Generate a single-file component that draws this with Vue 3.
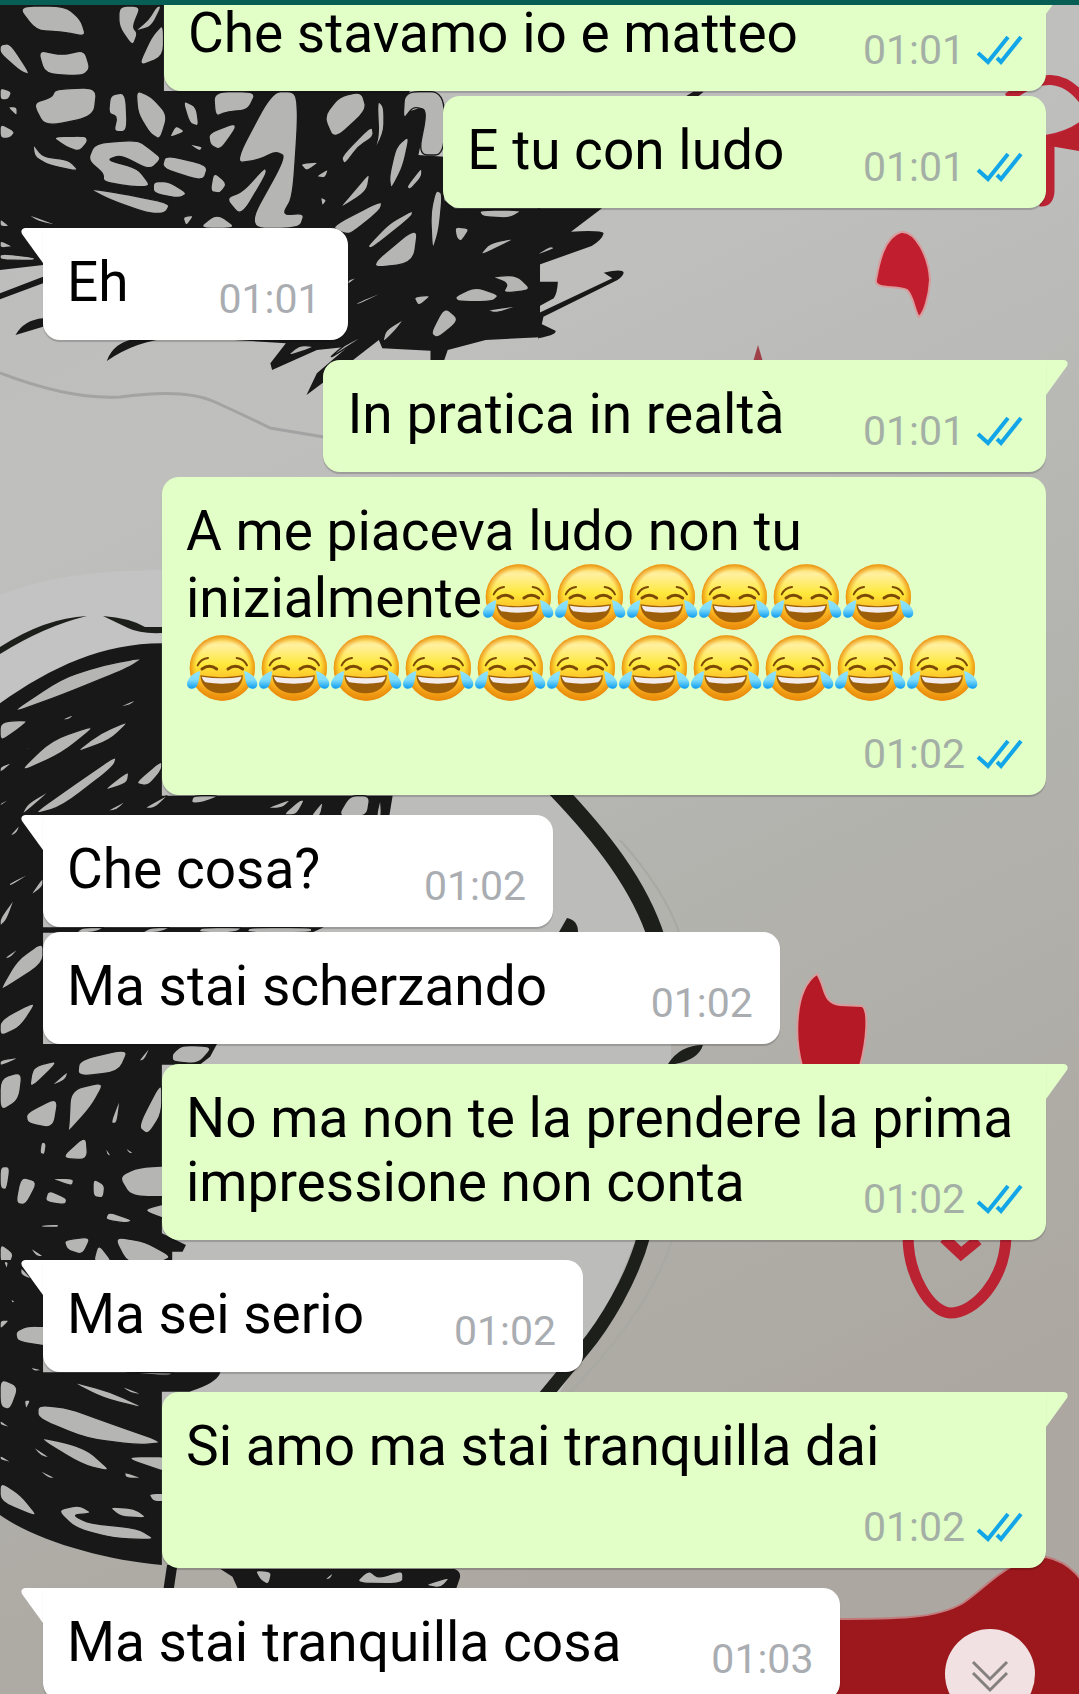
<template>
  <div class="screen">

    <!-- WALLPAPER -->
    <svg class="wallpaper" viewBox="0 0 1079 1694" preserveAspectRatio="xMidYMid slice" aria-hidden="true">
      <defs>
        <linearGradient id="wall" x1="0" y1="0" x2="0.3" y2="1">
          <stop offset="0" stop-color="#bcbcbc" />
          <stop offset="0.3" stop-color="#bfbfbe" />
          <stop offset="0.6" stop-color="#b4b5b0" />
          <stop offset="1" stop-color="#aca7a1" />
        </linearGradient>
        <linearGradient id="face" x1="0" y1="0" x2="0" y2="1">
          <stop offset="0" stop-color="#fbd54a" />
          <stop offset="0.15" stop-color="#fff0a0" />
          <stop offset="0.45" stop-color="#ffe83a" />
          <stop offset="0.75" stop-color="#fbb321" />
          <stop offset="1" stop-color="#ea8a0c" />
        </linearGradient>
        <radialGradient id="rim" cx="0.5" cy="0.5" r="0.5">
          <stop offset="0.8" stop-color="#f09a10" stop-opacity="0" />
          <stop offset="1" stop-color="#e88a0c" stop-opacity="0.9" />
        </radialGradient>
        <linearGradient id="tear" x1="0" y1="0" x2="0" y2="1">
          <stop offset="0" stop-color="#8fe4fb" />
          <stop offset="0.5" stop-color="#7fdcfb" />
          <stop offset="1" stop-color="#0b9bee" />
        </linearGradient>
        <symbol id="joy" viewBox="27 39 216 213">
          <circle cx="136" cy="141" r="98" fill="url(#face)" />
          <circle cx="136" cy="141" r="98" fill="url(#rim)" />
          <g fill="none" stroke="#7d4a06" stroke-linecap="round">
            <path stroke-width="6" d="M62 133Q72 113 93 111M210 133Q200 113 179 111" />
            <path stroke-width="9" d="M75 144Q97 128 119 144M153 144Q175 128 197 144" />
          </g>
          <path fill="#9c5e08" d="M70 163Q134 174 198 163C196 200 168 217 134 217S72 200 70 163z" />
          <path fill="#f3ecec" d="M74 167Q134 177 194 167Q191 178 183 184Q134 192 85 184Q77 178 74 167z" />
          <path fill="url(#tear)" d="M70 150C50 155 30 172 30 190C31 208 55 207 61 192C66 180 67 165 70 150z" />
          <path fill="url(#tear)" d="M201 150C221 155 241 172 241 190C240 208 216 207 210 192C205 180 204 165 201 150z" />
        </symbol>
      </defs>

      <rect width="1079" height="1694" fill="url(#wall)" />
      <path fill="#c3c3c3" d="M0 595Q60 570 162 570H500V790H0z" />
      <path fill="#bcbcbb" d="M0 780H550Q650 870 668 1000Q690 1180 560 1392H545L160 1500Q60 1500 0 1400z" />
      <path fill="none" stroke="#a3a3a3" stroke-width="3" d="M0 373Q70 400 120 397Q185 388 215 402Q250 418 270 428L330 438" />
      <path fill="none" stroke="#a9a9a4" stroke-width="2" d="M570 1392Q650 1310 672 1240M620 840Q665 890 680 935" />

      <!-- hair strokes -->
      <g v-for="(part, i) in doodles" :key="i" :transform="part.place">
        <path fill="#171817" :d="part.ink" />
        <path fill="#b5b5b4" stroke="#171817" stroke-width="4" :d="soften(part.gaps)" />
      </g>

      <!-- face outline -->
      <g fill="none" stroke="#1d1f1b">
        <path stroke-width="17" d="M555 788C600 835 640 885 657 940" />
        <path stroke-width="13" d="M644 1235C632 1280 604 1325 583 1350L545 1396" />
      </g>
      <path fill="#1d1f1b" d="M0 647Q45 618 87 616Q45 626 0 654zM103 616Q130 618 145 627H162V633Q140 634 128 628zM559 932L567 918Q578 920 578 932zM668 1064Q680 1045 703 1045Q698 1060 675 1064z" />

      <!-- red shapes -->
      <g stroke="#d99b9c" stroke-width="2">
        <path fill="#c11f2f" d="M901 232C915 230 929 257 930 280C929 297 924 313 919 317C914 310 914 297 907 290C898 285 874 290 876 280C879 263 884 237 901 232z" />
        <path fill="#b51926" d="M817 974C826 987 822 1003 840 1005L862 1006C869 1010 867 1040 860 1066H802C795 1040 793 990 817 974z" />
      </g>
      <path fill="#a04048" d="M753 362L758 345L763 362z" />
      <g fill="none" stroke="#bb2333">
        <path stroke-width="10" d="M1008 98Q1055 60 1085 102M1046 140Q1070 136 1085 124" />
        <path stroke-width="11" d="M1049 140V190Q1049 202 1040 201" />
        <path stroke-width="11" d="M908 1236C908 1275 930 1312 950 1313C975 1313 1005 1280 1006 1236" />
        <path stroke-width="11" d="M944 1238L961 1254L978 1240" />
      </g>
      <path fill="#b8202e" d="M1050 138L1085 122V152L1050 146z" />
      <path fill="#9c181c" stroke="#c27b7d" stroke-width="2" d="M820 1619C890 1619 935 1620 963 1603C990 1585 1005 1560 1046 1557C1070 1562 1085 1580 1090 1600V1704H820z" />
    </svg>

    <!-- TOP BAR -->
    <header class="topbar"></header>

    <!-- MESSAGES -->
    <main class="chat">
      <ul class="messages">
        <li
          v-for="(msg, i) in messages"
          :key="i"
          class="row"
          :class="[msg.from, { first: msg.tail }]"
        >
          <svg v-if="msg.tail" class="tail" viewBox="0 0 23 36" aria-hidden="true">
            <path d="M23 0H4Q-1 1 1 6L22 35H23z" />
          </svg>

          <div class="bubble">
            <p class="text">
              {{ msg.text }}<template v-for="(count, r) in msg.emoji" :key="r"><wbr><span class="run"><svg v-for="n in count" :key="n" class="emoji" role="img" aria-label="😂"><use href="#joy" /></svg></span></template><span class="spacer"></span>
            </p>

            <div class="meta">
              <time>{{ msg.time }}</time>
              <svg v-if="msg.from === 'me'" class="ticks" viewBox="-1 -1 47 30" role="img" aria-label="Letto">
                <path d="M1 17L11 26L31 1M20 22L24 26L44 1" />
              </svg>
            </div>
          </div>
        </li>
      </ul>
    </main>

    <!-- SCROLL DOWN -->
    <button class="scroll-down" type="button" aria-label="Vai in fondo">
      <svg viewBox="0 0 90 90" aria-hidden="true">
        <path d="M28 33L45 50L62 33M28 44L45 61L62 44" />
      </svg>
    </button>

  </div>
</template>

<script setup>
// a message that ends with \u00a0 was sent with a trailing space
const messages = [
  { from: 'me', text: 'Che stavamo io e matteo', time: '01:01', tail: true },
  { from: 'me', text: 'E tu con ludo\u00a0', time: '01:01' },
  { from: 'them', text: 'Eh', time: '01:01', tail: true },
  { from: 'me', text: 'In pratica in realtà\u00a0', time: '01:01', tail: true },
  { from: 'me', text: 'A me piaceva ludo non tu inizialmente', emoji: [6, 11], time: '01:02' },
  { from: 'them', text: 'Che cosa?\u00a0', time: '01:02', tail: true },
  { from: 'them', text: 'Ma stai scherzando\u00a0', time: '01:02' },
  { from: 'me', text: 'No ma non te la prendere la prima impressione non conta', time: '01:02', tail: true },
  { from: 'them', text: 'Ma sei serio', time: '01:02', tail: true },
  { from: 'me', text: 'Si amo ma stai tranquilla dai', time: '01:02', tail: true },
  { from: 'them', text: 'Ma stai tranquilla cosa', time: '01:03', tail: true }
]

// ink = dark strokes, gaps = wall showing between them
const doodles = [
  {
    place: 'scale(0.3444 0.3333)',
    ink: 'M0 15H476V273H1190L1170 340L1230 320L1240 340L1215 465L1290 470V600L1320 625H1568V1012L1410 1020L1300 1050L1290 1080H1250V1052L1110 1045L1100 1020L1000 1100L890 1185L920 1120L1010 1040L920 1050L790 1110L785 1090L830 1030L680 1020V700H125V795L0 810zM0 880L125 830V850L0 898zM45 1005Q70 960 125 955V980zM310 1083Q330 1025 400 1015H500Q400 1020 310 1083z',
    gaps: 'M50 18L190 18L235 60L250 110L180 95L105 92zM110 150L180 165L245 150L262 205L240 228L130 222zM95 310L150 292L160 268L282 262L272 350L130 380zM345 18L410 18L385 80L400 100L385 140L345 80zM440 110L475 70L475 170L400 200zM430 60L455 18L470 18L440 80L390 95zM320 285L365 278L370 395L330 395L340 350L315 340zM395 270L440 290L487 345L465 420L435 400L400 340zM0 135L30 130L90 225L60 215L0 160zM0 262L35 275L25 300L0 300zM20 320L50 320L50 350zM0 370L45 395L30 415L0 415zM150 410L250 408L255 425L230 455L190 440zM95 430L125 470L200 480L232 515L140 495L100 470zM275 430L400 420L440 450L470 475L435 510L350 465L310 480L400 505L440 560L380 560L300 545L300 520L255 480zM255 565L350 580L495 610L480 640L430 640L320 600zM445 545L490 545L545 580L520 595L445 580zM480 465L605 495L590 545L470 505zM605 400L680 370L685 385L640 450L610 435zM530 300L570 320L578 380L550 370zM620 275L745 275L720 330L660 335L625 350zM790 275L860 275L865 360L850 590L820 645L885 640L870 685L715 685L830 470L800 455L750 480L680 490zM510 375L540 395L490 415zM545 430L590 440L580 455zM620 515L660 550L640 580L610 575zM655 595L705 575L770 500L775 520L700 650zM530 650L565 645L540 680zM575 685L630 640L690 685zM940 350L985 290L1050 275L1065 330L970 420zM990 470L1080 375L1085 410L1040 440L1000 495zM1095 300L1115 320L1115 400L1060 500L1100 420zM1175 275L1290 275L1290 465L1215 465L1240 330L1200 320L1170 360zM1150 440L1190 405L1170 500L1135 570L1130 530zM870 490L930 485L890 515zM915 530L955 505L945 535zM980 630L1030 570L1075 515L1065 575zM1180 560L1225 500L1225 530L1190 570zM930 590L950 600L935 620zM960 680L1110 600L1105 630L1020 700L1000 700zM1065 740L1130 670L1200 630L1195 650L1080 745zM1065 805L1215 675L1200 790zM1265 570L1285 580L1275 690L1255 755L1250 640zM1390 770L1420 730L1505 712zM1320 680L1365 685L1340 725L1325 715zM1390 630L1520 630L1480 655L1400 650zM1320 890L1380 860L1450 885L1430 905L1330 905zM1425 830L1500 825L1545 870L1460 880L1475 850zM1250 1000L1290 920L1335 960L1270 1015zM1200 890L1255 885L1215 920zM1410 930L1515 915L1440 940zM1110 1030L1120 990L1175 955L1150 990zM1010 840L1040 830L1010 855zM1030 910L1150 860L1040 915zM830 1070L870 1035L920 1040zM1000 1035L1070 1000L950 1080zM0 655L30 680L0 680zM75 640L180 680L110 665zM0 720L40 740L0 745zM0 760L100 772L100 782L0 780z'
  },
  {
    place: 'translate(540 0) scale(0.3444 0.3333)',
    ink: 'M-5 625H180L90 695Q180 690 185 700Q180 720 150 738L-5 795zM-5 845H52Q50 880 40 895L-5 920zM-5 940L210 835L185 818Q240 805 243 818Q240 830 225 840L10 950L-5 1020zM0 970L45 992Q50 1005 -5 1015zM425 288L445 275H475L460 288z',
    gaps: 'M-5 760L30 738L45 745L-5 765z'
  },
  {
    place: 'translate(0 420) scale(0.3444 0.3333)',
    ink: 'M0 850C150 740 300 670 470 670V1127H1140L1130 1190H0z',
    gaps: 'M20 885L180 775L300 735L420 712L370 745L180 825zM50 1060L150 960L285 912L180 1000zM215 1000L290 940L380 900L320 960zM90 1185L220 1090L340 1005L330 1040L180 1160zM295 1115L375 1050L370 1090zM390 1090L470 1020L470 1050L430 1098zM0 905L85 900L50 930L0 965zM335 865L400 835L380 855zM175 900L220 880L200 900zM305 1175L370 1140L340 1170zM415 1165L495 1120L450 1165zM0 1040L40 1025L0 1060zM555 1150L560 1127L640 1127L590 1148zM770 1165L850 1135L820 1165zM820 1185L870 1140L885 1140L860 1185zM80 1150L155 1105L60 1190zM0 1150L40 1130L0 1160zM900 1190L940 1140L930 1190zM980 1190L1015 1127L1075 1127L1065 1190zM1092 1190L1105 1130L1108 1190zM310 795L340 780L320 795zM75 985L95 980L80 990zM0 1250L60 1200L20 1260z'
  },
  {
    place: 'translate(0 840) scale(0.3444 0.3333)',
    ink: 'M0 -80H90L125 0V262H940L905 278H125V612H630L610 650L580 674H470V1180L540 1215L530 1235H500V1270H0z',
    gaps: 'M0 450L50 360L125 305L125 370L20 440zM0 540L110 480L60 560L0 590zM0 235L45 170L20 240L0 260zM0 660L65 650L0 680zM85 750L95 680L175 660zM0 715L65 695L55 780L0 815zM225 710L230 660L375 625L345 695zM200 860L205 750L305 725L265 800L195 880zM75 820L170 770L155 865L80 850zM400 860L470 720L470 820L430 885zM115 940L120 905L135 910L130 945zM175 955L250 885L255 960zM0 980L30 980L20 1050L0 1045zM45 1090L60 1010L110 1025L75 1095zM130 1085L140 1050L195 1075L190 1095zM145 1015L215 1015L210 1040zM270 1070L270 1015L305 1035L300 1075zM345 1010L400 982L520 975L520 1070L380 1070zM305 1140L315 1115L385 1140L370 1150zM410 1110L500 1085L500 1145zM185 1200L265 1190L240 1245L195 1230zM330 1190L420 1205L500 1250L460 1270L370 1270zM85 1220L130 1250L105 1250zM0 1210L40 1240L30 1270L0 1270zM270 1270L285 1210L330 1270zM500 665L500 640L530 615L620 620L575 672zM320 850L350 770L340 850zM400 665L440 615L420 660zM145 740L200 690L190 720zM25 130L105 90L30 140zM85 170L125 110L125 140zM120 1155L170 1152L170 1162L120 1162zM305 920L325 950L310 945zM360 920L390 940L375 942zM10 355L60 320L30 355zM25 -10L60 -50L50 -20zM220 278L240 262L310 262L270 278zM410 278L440 262L500 262L460 278zM585 262L710 262L680 278L575 278zM725 262L905 262L905 278L715 278z'
  },
  {
    place: 'translate(0 1260) scale(0.3444 0.3333)',
    ink: 'M0 0H62L125 100V337H640Q630 370 550 395H470V915C300 900 100 840 0 765zM485 915H515L505 985H475zM640 927H1320Q1340 935 1335 955L1325 985H690L675 950z',
    gaps: 'M0 355L55 380L30 450L0 440zM110 435L200 445L320 490L480 548L400 555L250 535L110 475zM105 530L200 550L260 575L325 635L240 615zM350 590L520 590L520 650zM0 665L60 705L115 775L0 725zM360 635L415 655L365 655zM430 700L500 700L500 725L445 725zM165 750L230 735L270 760L210 765L260 790L400 805L455 840L330 835L220 805zM315 740L390 745L430 775L350 770zM45 215L80 198L160 200L160 262L50 245zM200 362L320 395L430 448L300 415zM345 375L420 405L380 400zM0 180L30 180L0 210zM105 625L165 655L140 655zM1030 970L1070 930L1100 955L1170 930L1170 972zM740 930L790 935L780 975L755 960zM940 960L970 935L960 958zM1230 975L1310 950L1280 985zM0 480L35 505L0 495zM85 320L125 330L100 335zM70 420L90 420L75 450zM10 5L25 5L20 30zM60 20L95 60L60 45zM30 115L45 125L35 130zM90 555L150 595L120 590zM340 338L510 338L490 347zM0 585L40 610L0 600z'
  }
]

// rounds the corners of M/L polygons so that they look hand drawn
function soften(path) {
  const mix = (a, b, t) => `${(a[0] + (b[0] - a[0]) * t).toFixed(1)} ${(a[1] + (b[1] - a[1]) * t).toFixed(1)}`

  return path
    .split('z')
    .filter(Boolean)
    .map((shape) => {
      const points = shape.slice(1).split('L').map((p) => p.split(' ').map(Number))

      return points
        .map((point, i) => {
          const prev = points[(i + points.length - 1) % points.length]
          const next = points[(i + 1) % points.length]

          return `${i ? 'L' : 'M'}${mix(point, prev, 0.35)}Q${point.join(' ')} ${mix(point, next, 0.35)}`
        })
        .join('') + 'z'
    })
    .join('')
}
</script>

<style>
body {
  margin: 0;
}
</style>

<style scoped>
.screen {
  position: relative;
  height: 100vh;
  overflow: hidden;
  display: flex;
  flex-direction: column;
  background: #b8b8b6;
  font-family: Roboto, "Noto Sans", sans-serif;
}

.wallpaper {
  position: absolute;
  inset: 0;
  width: 100%;
  height: 100%;
}

.topbar {
  position: relative;
  flex: none;
  height: 5px;
  background: #075e54;
}

.chat {
  position: relative;
  flex: 1;
  min-height: 0;
  overflow: hidden;
  display: flex;
  flex-direction: column;
}

/* scrolled so that the oldest message is partly out of view */
.messages {
  list-style: none;
  margin: -26px 0 0;
  padding: 0 33px 0 43px;
}

.row {
  display: flex;
  position: relative;
  margin-top: 5px;
}

.row.first {
  margin-top: 20px;
}

.row:first-child {
  margin-top: 0;
}

.row.me {
  justify-content: flex-end;
  padding-left: 119px;
}

.bubble {
  position: relative;
  max-width: 100%;
  box-sizing: border-box;
  padding: 22px 23px 26px 24px;
  border-radius: 17px;
  box-shadow: 0 2px 1px rgba(0, 0, 0, 0.18);
}

.me .bubble {
  background: #e1ffc7;
}

.them .bubble {
  background: #fff;
}

.me.first .bubble {
  border-top-right-radius: 0;
}

.them.first .bubble {
  border-top-left-radius: 0;
}

.tail {
  position: absolute;
  top: 0;
  width: 23px;
  height: 36px;
}

.them .tail {
  left: -22px;
  fill: #fff;
}

.me .tail {
  right: -22px;
  fill: #e1ffc7;
  transform: scaleX(-1);
}

.text {
  margin: 0;
  font-size: 55px;
  line-height: 64px;
  color: #000;
}

.run {
  white-space: nowrap;
}

.emoji {
  display: inline-block;
  width: 72px;
  height: 71px;
  vertical-align: -17px;
}

/* keeps room for the time on the last line */
.spacer {
  display: inline-block;
  width: 196px;
  height: 1px;
}

.me .spacer {
  width: 225px;
}

.meta {
  position: absolute;
  right: 27px;
  bottom: 17px;
  display: flex;
  align-items: flex-end;
  gap: 11px;
  font-size: 41px;
  line-height: 48px;
  color: #a9adb1;
}

.me .meta {
  right: 23px;
  color: #a4afa5;
}

.ticks {
  width: 47px;
  height: 30px;
  margin-bottom: 9px;
}

.ticks path {
  fill: none;
  stroke: #12a5e8;
  stroke-width: 4;
}

.scroll-down {
  position: absolute;
  right: 44px;
  bottom: -25px;
  width: 90px;
  height: 90px;
  padding: 0;
  border: none;
  border-radius: 50%;
  background: #f1e1e2;
  cursor: pointer;
}

.scroll-down svg {
  display: block;
  width: 100%;
  height: 100%;
}

.scroll-down path {
  fill: none;
  stroke: #858080;
  stroke-width: 3;
}
</style>
